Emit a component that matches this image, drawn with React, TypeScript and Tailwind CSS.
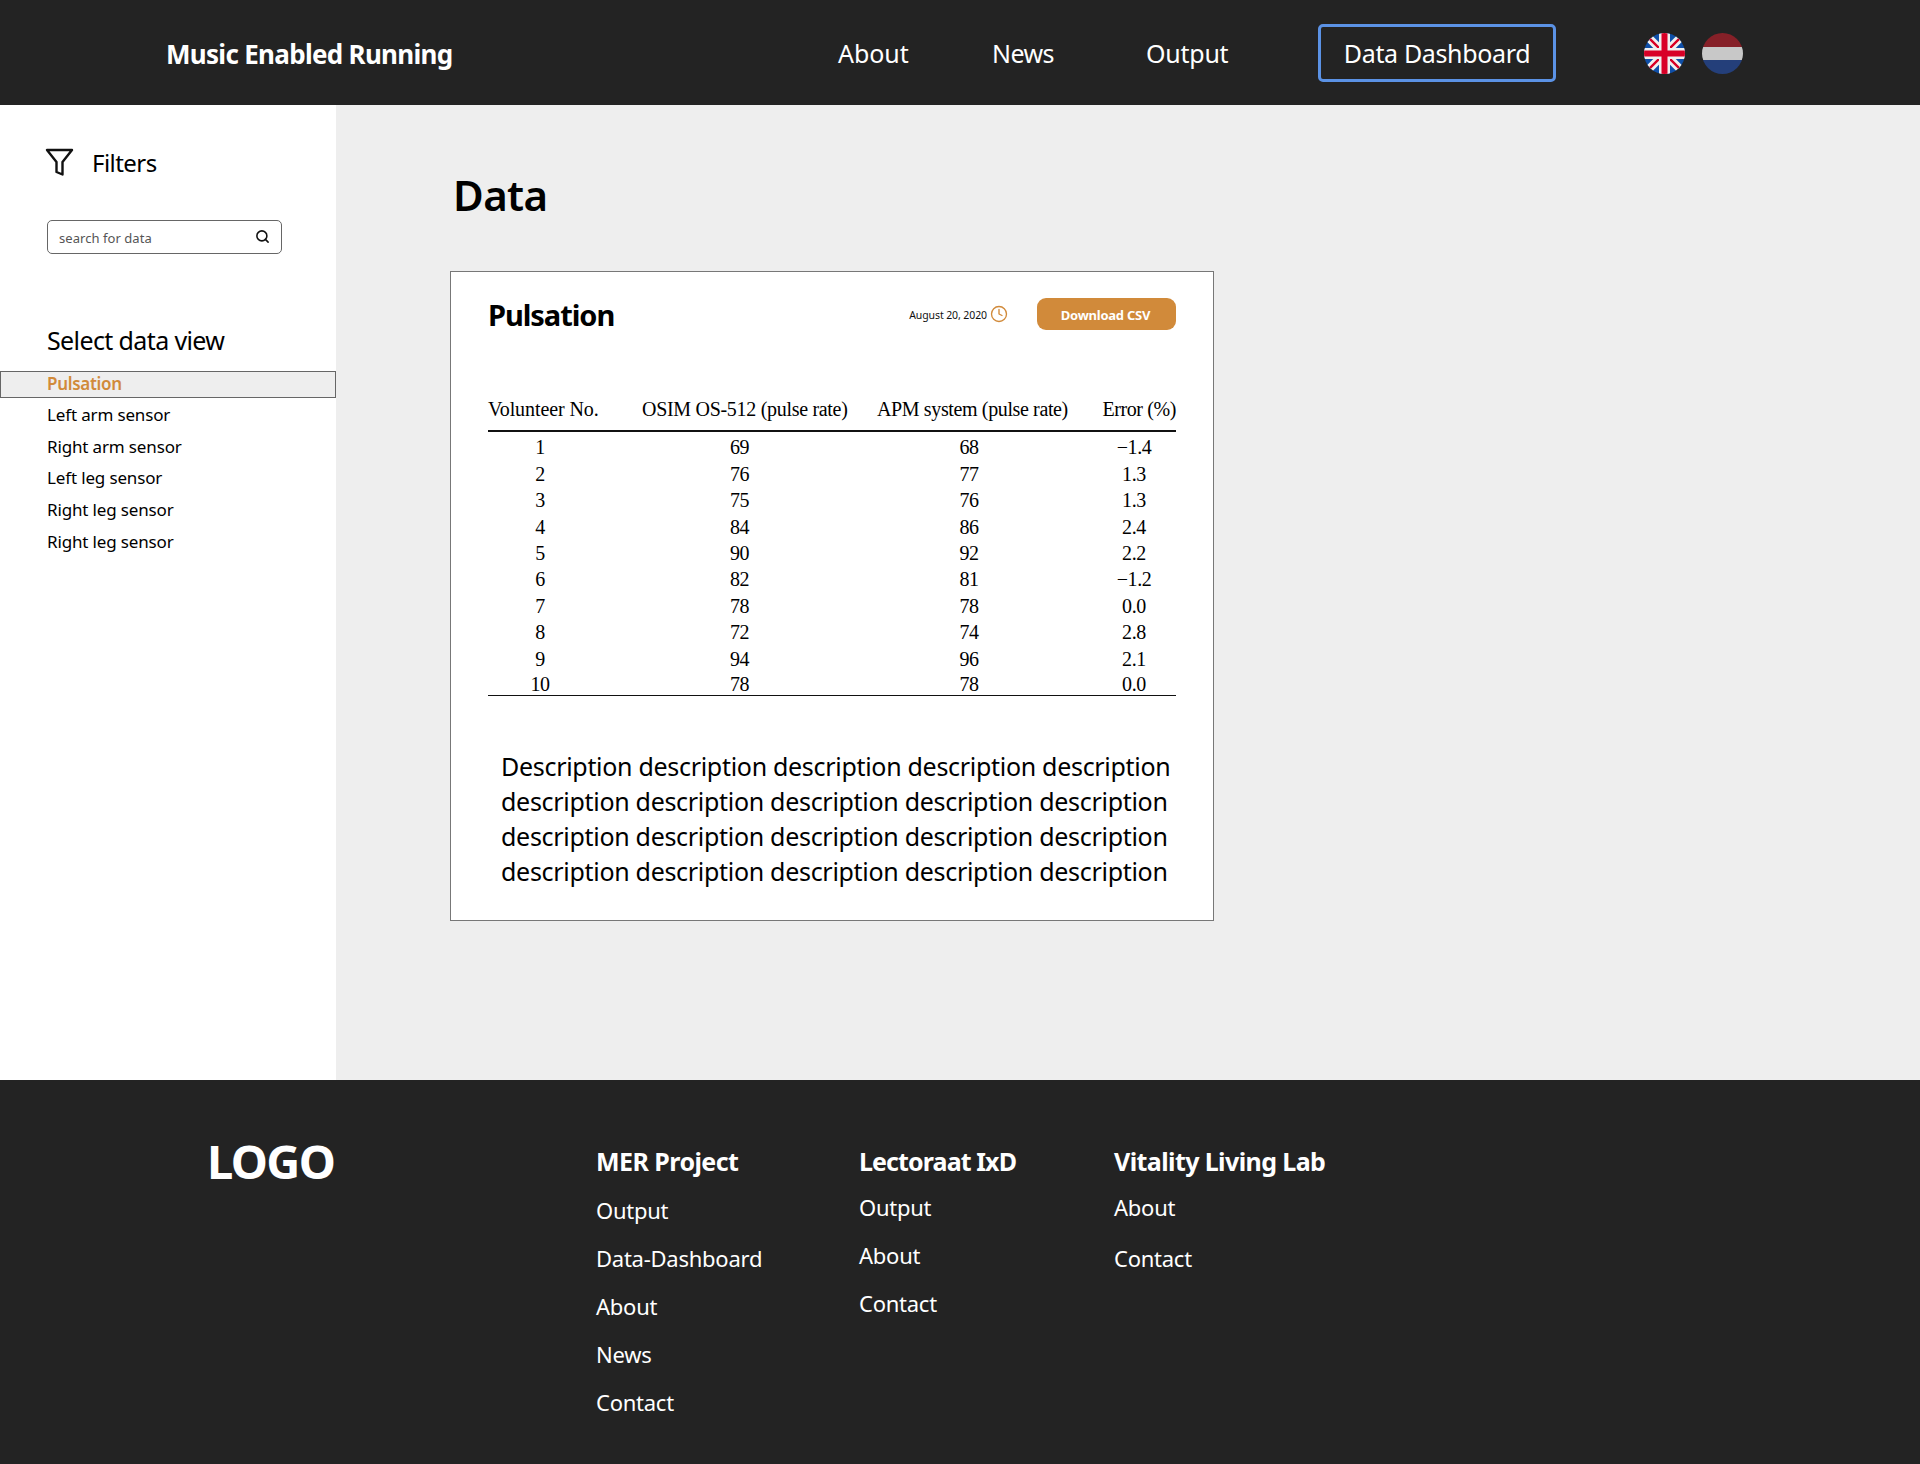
import { Clock, Search } from "lucide-react";

const rows = [
  ["1", "69", "68", "−1.4"],
  ["2", "76", "77", "1.3"],
  ["3", "75", "76", "1.3"],
  ["4", "84", "86", "2.4"],
  ["5", "90", "92", "2.2"],
  ["6", "82", "81", "−1.2"],
  ["7", "78", "78", "0.0"],
  ["8", "72", "74", "2.8"],
  ["9", "94", "96", "2.1"],
  ["10", "78", "78", "0.0"],
];
const views = ["Left arm sensor", "Right arm sensor", "Left leg sensor", "Right leg sensor", "Right leg sensor"];
const desc = "description description description description description";

function Uk() {
  return (
    <svg viewBox="0 0 41 41" className="w-[41px] h-[41px]">
      <defs>
        <clipPath id="c"><circle cx="20.5" cy="20.5" r="20.5" /></clipPath>
      </defs>
      <g clipPath="url(#c)">
        <path d="M0 0h41v41H0z" fill="#0f4fa8" />
        <path d="M0 0L41 41M41 0L0 41" stroke="#f0f0f0" strokeWidth="8" />
        <path d="M0 0L41 41M41 0L0 41" stroke="#d80027" strokeWidth="2.4" />
        <path d="M20.5 0V41M0 20.5H41" stroke="#f0f0f0" strokeWidth="11" />
        <path d="M20.5 0V41M0 20.5H41" stroke="#d80027" strokeWidth="6" />
      </g>
    </svg>
  );
}

function Nl() {
  return (
    <div className="w-[41px] h-[41px] rounded-full overflow-hidden flex flex-col">
      <div className="h-[14px] bg-[#862028]" />
      <div className="h-[13px] bg-[#c8c8c8]" />
      <div className="h-[14px] bg-[#243f7a]" />
    </div>
  );
}

function FooterCol({ title, items, cls, gap, head }: { title: string; items: string[]; cls: string; gap: string; head: string }) {
  return (
    <div className={cls}>
      <div className={`text-[25px] leading-[34px] font-bold text-white ${head}`}>{title}</div>
      <div className={`flex flex-col ${gap}`}>
        {items.map((t) => (
          <div key={t} className="text-[22px] leading-[32px] text-white tracking-[-0.25px]">{t}</div>
        ))}
      </div>
    </div>
  );
}

export default function App() {
  return (
    <div className="w-[1920px] h-[1464px] flex flex-col bg-[#eeeeee] text-black font-['Noto_Sans',sans-serif]">
      <header className="h-[105px] shrink-0 bg-[#232323] flex items-center text-white">
        <div className="ml-[166px] w-[672px] pt-[3px] text-[26px] font-bold tracking-[-0.7px]">Music Enabled Running</div>
        <div className="w-[154px] pt-[2px] text-[25px] tracking-[-0.05px]">About</div>
        <div className="w-[154px] pt-[2px] text-[25px] tracking-[-0.6px]">News</div>
        <div className="w-[172px] pt-[2px] text-[25px] tracking-[-0.25px]">Output</div>
        <div className="w-[238px] h-[58px] pt-[2px] border-[3px] border-[#5b92e5] rounded-[5px] flex items-center justify-center text-[25px] tracking-[-0.35px]">Data Dashboard</div>
        <div className="ml-[88px] mt-[2px] flex gap-[17px]">
          <Uk />
          <Nl />
        </div>
      </header>
      <div className="h-[975px] shrink-0 flex">
        <aside className="w-[336px] bg-white shrink-0 flex flex-col">
          <div className="ml-[44px] mt-[41px] flex items-center gap-[18px]">
            <svg viewBox="0 0 30 30" className="mb-[3px] w-[30px] h-[30px]" fill="none" stroke="#111" strokeWidth="2.4" strokeLinejoin="round">
              <path d="M3 3H28L18.5 15V27.5L12.5 25V15Z" />
            </svg>
            <div className="text-[24px] leading-[34px] tracking-[-0.55px]">Filters</div>
          </div>
          <div className="ml-[47px] mt-[40px] w-[235px] h-[34px] border border-[#666] rounded-[5px] flex items-center justify-between pl-[11px] pr-[11px]">
            <span className="pt-[3px] text-[13px] tracking-[0.05px] text-[#555]">search for data</span>
            <Search size={15} strokeWidth={2.5} className="mb-[2px] text-[#111]" />
          </div>
          <div className="ml-[47px] mt-[68px] text-[25px] leading-[36px] tracking-[-0.62px]">Select data view</div>
          <div className="mt-[13px] h-[27px] pb-[1px] bg-[#eeeeee] border border-[#666] pl-[46px] flex items-center text-[17px] font-semibold tracking-[-0.3px] text-[#d18a3a]">Pulsation</div>
          <div className="mt-[1px] flex flex-col">
            {views.map((v, i) => (
              <div key={i} className="ml-[47px] h-[31.7px] flex items-center text-[17px] tracking-[-0.15px]">{v}</div>
            ))}
          </div>
        </aside>
        <main className="flex-1 pl-[114px]">
          <h1 className="ml-[3px] mt-[62px] text-[42px] leading-[56px] font-semibold tracking-[-0.6px]">Data</h1>
          <section className="mt-[48px] w-[764px] h-[650px] border border-[#777] bg-white flex flex-col pl-[37px] pr-[37px]">
            <div className="mt-[22px] h-[40px] flex items-center">
              <div className="pt-[1px] text-[29px] font-bold tracking-[-1.05px] flex-1">Pulsation</div>
              <div className="pt-[3px] text-[10.5px] tracking-[-0.1px] text-[#111]">August 20, 2020</div>
              <Clock size={18} strokeWidth={1.8} className="ml-[3px] mr-[1px] text-[#d18a3a]" />
              <div className="ml-[28px] pt-[3px] pr-[2px] w-[139px] h-[32px] rounded-[9px] bg-[#d18a3a] text-white text-[13px] font-bold flex items-center justify-center tracking-[-0.25px]">Download CSV</div>
            </div>
            <table className="mt-[62px] w-[688px] font-['Liberation_Serif',serif] text-[20px] leading-[26.4px] table-fixed border-b border-[#111] tracking-[-0.4px]">
              <thead>
                <tr className="border-b-2 border-[#111]">
                  <th className="w-[154px] pb-[8px] font-normal text-left whitespace-nowrap tracking-[-0.1px]">Volunteer No.</th>
                  <th className="w-[235px] pb-[8px] font-normal text-left whitespace-nowrap tracking-[-0.3px]">OSIM OS-512 (pulse rate)</th>
                  <th className="w-[199px] pb-[8px] font-normal text-left whitespace-nowrap tracking-[-0.37px]">APM system (pulse rate)</th>
                  <th className="pb-[8px] font-normal text-right whitespace-nowrap tracking-[-0.4px]">Error (%)</th>
                </tr>
              </thead>
              <tbody className="[&_tr:first-child_td]:pt-[2px] [&_tr:last-child_td]:pt-[1px] [&_tr:last-child_td]:leading-[22px]">
                {rows.map((r) => (
                  <tr key={r[0]}>
                    <td className="pr-[50px] text-center">{r[0]}</td>
                    <td className="pr-[40px] text-center">{r[1]}</td>
                    <td className="pr-[15px] text-center">{r[2]}</td>
                    <td className="pl-[16px] text-center">{r[3]}</td>
                  </tr>
                ))}
              </tbody>
            </table>
            <div className="mt-[53px] ml-[13px] w-[680px] text-[25px] leading-[35px] tracking-[-0.3px] whitespace-nowrap">
              <div>Description description description description description</div>
              <div>{desc}</div>
              <div>{desc}</div>
              <div>{desc}</div>
            </div>
          </section>
        </main>
      </div>
      <footer className="flex-1 bg-[#232323] flex items-start text-white">
        <div className="ml-[207px] mt-[51px] w-[389px] text-[47px] leading-[60px] font-bold tracking-[-1.6px]">LOGO</div>
        <FooterCol title="MER Project" head="tracking-[-0.55px]" cls="w-[263px] mt-[64px]" gap="mt-[16px] gap-[16px]" items={["Output", "Data-Dashboard", "About", "News", "Contact"]} />
        <FooterCol title="Lectoraat IxD" head="tracking-[-0.9px]" cls="w-[255px] mt-[64px]" gap="mt-[13px] gap-[16px]" items={["Output", "About", "Contact"]} />
        <FooterCol title="Vitality Living Lab" head="tracking-[-0.6px]" cls="w-[300px] mt-[64px]" gap="mt-[13px] gap-[19px]" items={["About", "Contact"]} />
      </footer>
    </div>
  );
}
